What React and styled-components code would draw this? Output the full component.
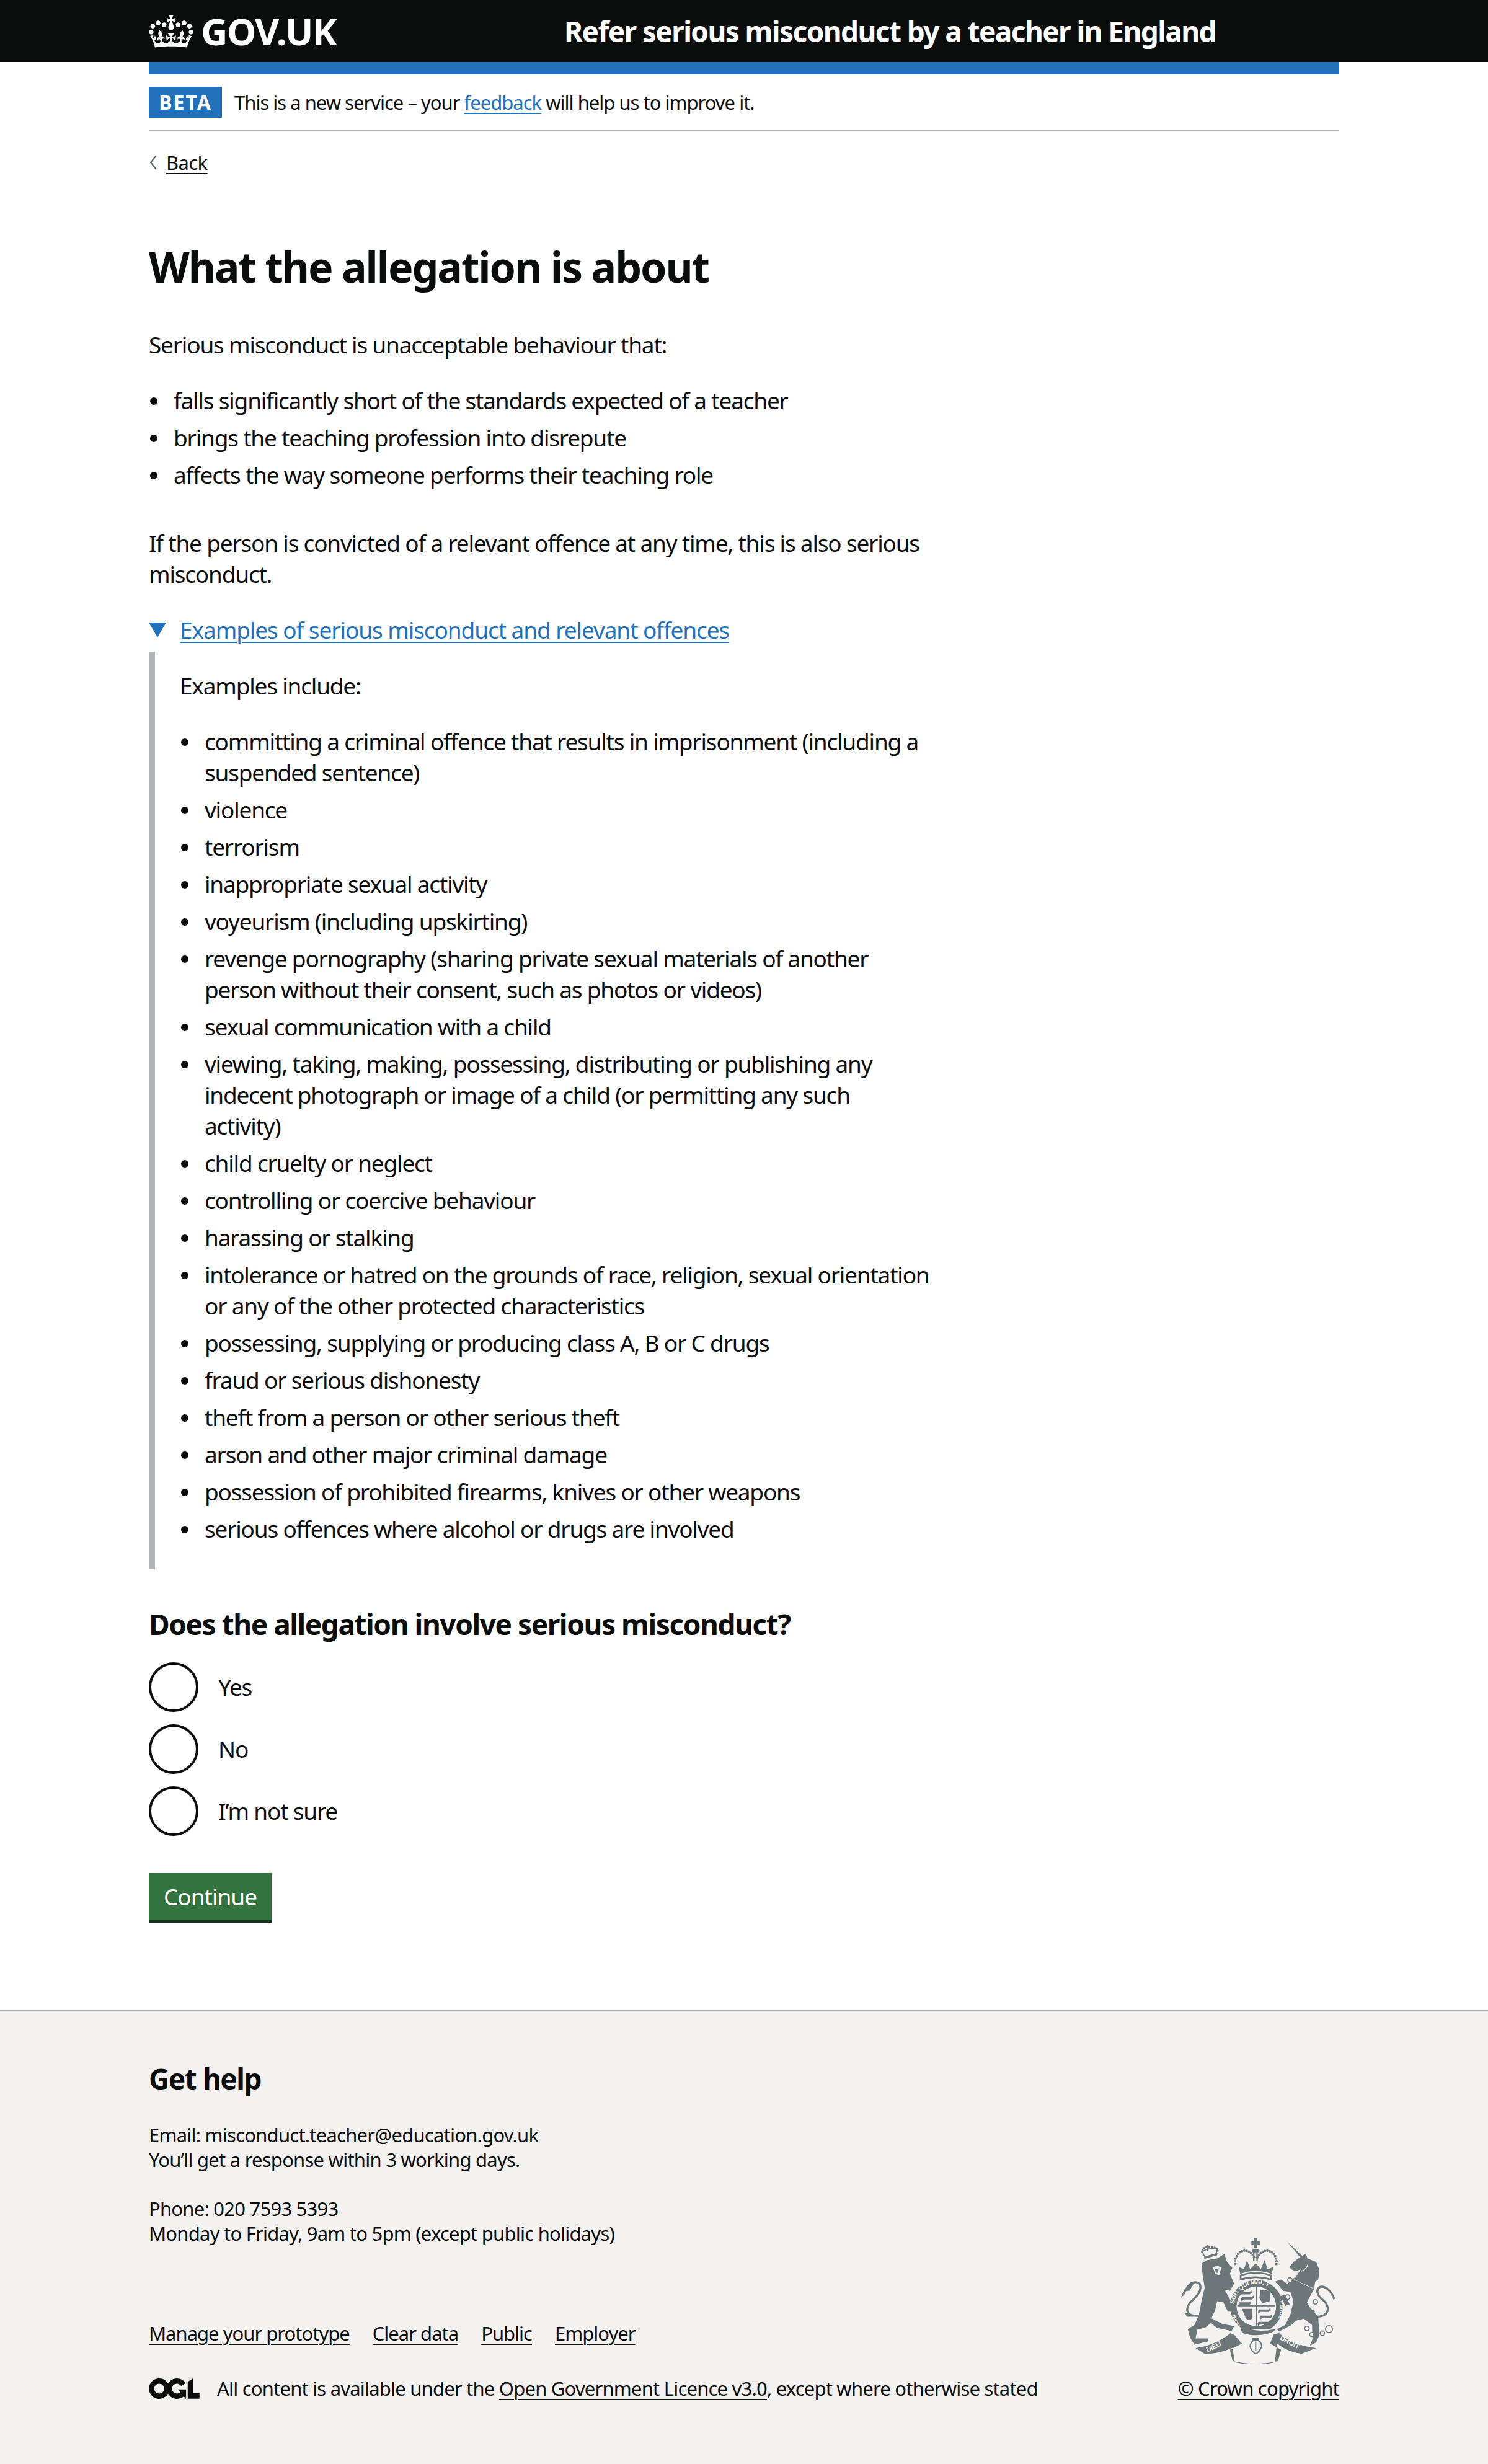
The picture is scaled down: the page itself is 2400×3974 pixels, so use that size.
import React from "react";
import styled, { createGlobalStyle } from "styled-components";

const Global = createGlobalStyle`
  html, body { margin: 0; padding: 0; background: #fff; }
  body { font-family: "Noto Sans", "Liberation Sans", sans-serif; color: #0b0c0c; font-size: 37px; line-height: 50px; letter-spacing: -1.2px; }
  * { box-sizing: border-box; }
`;

const Header = styled.header`
  height: 100px; background: #0b0c0c; color: #fff; padding: 0 240px;
  display: flex; align-items: center;
`;
const Logo = styled.div`display: flex; align-items: center; gap: 12px; width: 670px; flex: none;`;
const LogoText = styled.span`font-size: 60px; line-height: 60px; font-weight: 700; letter-spacing: -1.5px;`;
const ServiceName = styled.div`font-size: 46px; line-height: 50px; font-weight: 700; letter-spacing: -1.6px; white-space: nowrap;`;
const Container = styled.div`margin: 0 240px; width: 1920px;`;
const Band = styled.div`height: 20px; background: #2371b9;`;
const Phase = styled.div`
  display: flex; align-items: center; gap: 20px; height: 92px;
  border-bottom: 2px solid #b1b4b6; font-size: 31px; line-height: 40px; letter-spacing: -1px;
`;
const Tag = styled.strong`
  width: 118px; height: 50px; background: #2371b9; color: #fff; display: flex; align-items: center; justify-content: center;
  font-size: 32px; letter-spacing: 2px; font-weight: 700;
`;
const BlueLink = styled.a`color: #2371b9; text-decoration: underline; text-decoration-thickness: 2px; text-underline-offset: 5px;`;
const BackRow = styled.div`
  margin-top: 30px; display: flex; align-items: center; gap: 14px; font-size: 31px; line-height: 40px; letter-spacing: -0.6px;
`;
const DarkLink = styled.a`color: #0b0c0c; text-decoration: underline; text-decoration-thickness: 2px; text-underline-offset: 5px; white-space: ${p => p.$nowrap ? "nowrap" : "normal"};`;
const Main = styled.main`width: 1260px; padding-top: 108px;`;
const Title = styled.h1`margin: 0 0 61px; font-size: 68px; line-height: 80px; font-weight: 700; letter-spacing: -2.1px;`;
const P = styled.p`margin: 0 0 ${p => p.$mb ?? 40}px;`;
const List = styled.ul`margin: 0 0 ${p => p.$mb ?? 60}px; padding: 0 0 0 40px; list-style: none;`;
const Li = styled.li`
  margin-bottom: 10px; position: relative; white-space: pre-line;
  &::before { content: ""; position: absolute; left: -38px; top: 20px; width: 12px; height: 12px; border-radius: 50%; background: #0b0c0c; }
`;
const Summary = styled.div`display: flex; align-items: center; gap: 22px; margin-bottom: 10px; letter-spacing: -1.08px;`;
const Reveal = styled.div`border-left: 10px solid #b1b4b6; padding: 30px 0 30px 40px; margin-right: -30px;`;
const Question = styled.h2`margin: 58px 0 32px; font-size: 46px; line-height: 60px; font-weight: 700; letter-spacing: -1.45px;`;
const Radios = styled.div`display: flex; flex-direction: column; gap: 20px;`;
const Radio = styled.label`display: flex; align-items: center; gap: 32px; height: 80px;`;
const Circle = styled.span`width: 80px; height: 80px; border: 4px solid #0b0c0c; border-radius: 50%; background: #fff; flex: none;`;
const Button = styled.button`
  display: block; margin: 60px 0 ${p => p.$mb}px; width: 198px; height: 76px; padding: 0; border: 0; background: #327340; color: #fff;
  box-shadow: 0 4px 0 #122f1b; font: inherit; letter-spacing: -1px;
`;
const Footer = styled.footer`
  border-top: 2px solid #b1b4b6; background: #f3f2f1; padding: 78px 240px 102px; height: 733px;
  font-size: 31px; line-height: 40px; letter-spacing: -0.77px;
  display: flex; justify-content: space-between; align-items: flex-end;
`;
const Meta = styled.div`flex: 1;`;
const FooterTitle = styled.h2`margin: 0 0 41px; font-size: 46px; line-height: 60px; font-weight: 700; letter-spacing: -1.45px;`;
const FooterText = styled.p`margin: 0 0 39px;`;
const FooterLinks = styled.div`display: flex; gap: 37px; margin: 121px 0 49px; letter-spacing: -1px;`;
const Licence = styled.div`display: flex; align-items: center; gap: 28px; letter-spacing: -0.8px;`;
const Copyright = styled.div`display: flex; flex-direction: column; align-items: flex-end; gap: 19px; width: 262px; flex: none;`;
const ArmsWrap = styled.div`display: flex; margin-right: 7px;`;

const Crown = () => (
  <svg width="72" height="53" viewBox="0 0 132 97" aria-hidden="true">
    <path fill="currentColor" fillRule="evenodd" d="M25 30.2c3.5 1.5 7.7-.2 9.1-3.7 1.5-3.6-.2-7.8-3.9-9.2-3.6-1.4-7.6.3-9.1 3.9-1.4 3.5.3 7.5 3.9 9zM9 39.5c3.6 1.5 7.8-.2 9.2-3.7 1.5-3.6-.2-7.8-3.9-9.1-3.6-1.5-7.6.2-9.1 3.8-1.4 3.5.3 7.5 3.8 9zM4.4 57.2c3.5 1.5 7.7-.2 9.1-3.8 1.5-3.6-.2-7.7-3.9-9.1-3.5-1.5-7.6.3-9.1 3.8-1.4 3.5.3 7.6 3.9 9.1zm38.3-21.4c3.5 1.5 7.7-.2 9.1-3.8 1.5-3.6-.2-7.7-3.9-9.1-3.6-1.5-7.6.3-9.1 3.8-1.3 3.6.4 7.7 3.9 9.1zm64.4-5.6c-3.6 1.5-7.8-.2-9.1-3.7-1.5-3.6.2-7.8 3.8-9.2 3.6-1.4 7.7.3 9.2 3.9 1.3 3.5-.4 7.5-3.9 9zm15.9 9.3c-3.6 1.5-7.7-.2-9.1-3.7-1.5-3.6.2-7.8 3.7-9.1 3.6-1.5 7.7.2 9.2 3.8 1.5 3.5-.3 7.5-3.8 9zm4.7 17.7c-3.6 1.5-7.8-.2-9.2-3.8-1.5-3.6.2-7.7 3.9-9.1 3.6-1.5 7.7.3 9.2 3.8 1.3 3.5-.4 7.6-3.9 9.1zM89.3 35.8c-3.6 1.5-7.8-.2-9.2-3.8-1.4-3.6.2-7.7 3.9-9.1 3.6-1.5 7.7.3 9.2 3.8 1.4 3.6-.3 7.7-3.9 9.1zM69.7 17.7l8.9 4.7V9.3l-8.9 2.8c-.2-.3-.5-.6-.9-.9L72.4 0H59.6l3.5 11.2c-.3.3-.6.5-.9.9l-8.8-2.8v13.1l8.8-4.7c.3.3.6.7.9.9l-5 15.4v.1c-.2.8-.4 1.6-.4 2.4 0 4.1 3.1 7.5 7 8.1h.2c.3 0 .7.1 1 .1.4 0 .7 0 1-.1h.2c4-.6 7.1-4.1 7.1-8.1 0-.8-.1-1.7-.4-2.4V34l-5.1-15.4c.4-.2.7-.6 1-.9zM66 92.8c16.9 0 32.8 1.1 47.1 3.2 4-16.9 8.9-26.7 14-33.5l-9.6-3.4c1 4.9 1.1 7.2 0 10.2-1.5-1.4-3-4.3-4.2-8.7L108.6 76c2.8-2 5-3.2 7.5-3.3-4.4 9.4-10 11.9-13.6 11.2-4.3-.8-6.3-4.6-5.6-7.9 1-4.7 5.7-5.9 8-.5 4.3-8.7-3-11.4-7.6-8.8 7.1-7.2 7.9-13.5 2.1-21.1-8 6.1-8.1 12.3-4.5 20.8-4.7-5.4-12.1-2.5-9.5 6.2 3.4-5.2 7.9-2 7.2 3.1-.6 4.3-6.4 7.8-13.5 7.2-10.3-.9-10.9-8-11.2-13.8 2.5-.5 7.1 1.8 11 7.3L80.2 60c-4.1 4.4-8 5.3-12.3 5.4 1.4-4.4 8-11.6 8-11.6H55.5s6.4 7.2 7.9 11.6c-4.2-.1-8-1-12.3-5.4l1.4 16.4c3.9-5.5 8.5-7.7 10.9-7.3-.3 5.8-.9 12.8-11.1 13.8-7.2.6-12.9-2.9-13.5-7.2-.7-5 3.8-8.3 7.1-3.1 2.7-8.7-4.6-11.6-9.4-6.2 3.7-8.5 3.6-14.7-4.6-20.8-5.8 7.6-5 13.9 2.2 21.1-4.7-2.6-11.9.1-7.7 8.8 2.3-5.5 7.1-4.2 8.1.5.7 3.3-1.3 7.1-5.7 7.9-3.5.7-9-1.8-13.5-11.2 2.5.1 4.7 1.3 7.5 3.3l-4.7-15.4c-1.2 4.4-2.7 7.2-4.3 8.7-1.1-3-.9-5.3 0-10.2l-9.5 3.4c5 6.9 9.9 16.7 14 33.5 14.8-2.1 30.8-3.2 47.7-3.2z" />
  </svg>
);

const Chevron = () => (
  <svg width="14" height="26" viewBox="0 0 14 26" aria-hidden="true" style={{ flex: "none" }}>
    <path d="M12 2 L3 13 L12 24" fill="none" stroke="#505a5f" strokeWidth="2" />
  </svg>
);

const Triangle = () => (
  <svg width="28" height="24" viewBox="0 0 28 24" aria-hidden="true" style={{ flex: "none" }}>
    <path d="M0 0 H28 L14 24 Z" fill="#2371b9" />
  </svg>
);

const Ogl = () => (
  <svg width="82" height="33" viewBox="0 0 483.2 195.7" aria-hidden="true" style={{ flex: "none" }}>
    <path fill="#0b0c0c" d="M421.5 142.8V.1l-50.7 32.3v161.1h112.4v-50.7zm-122.3-9.6A47.12 47.12 0 0 1 221 97.8c0-26 21.1-47.1 47.1-47.1 16.7 0 31.4 8.7 39.7 21.8l42.7-27.2A97.63 97.63 0 0 0 268.1 0c-36.5 0-68.3 20.1-85.1 49.7A98 98 0 0 0 97.8 0C43.9 0 0 43.9 0 97.8s43.9 97.8 97.8 97.8c36.5 0 68.3-20.1 85.1-49.7a97.76 97.76 0 0 0 149.6 25.4l19.4 22.2h3v-87.8h-80l24.3 27.5zM97.8 145c-26 0-47.1-21.1-47.1-47.1s21.1-47.1 47.1-47.1 47.2 21 47.2 47S123.8 145 97.8 145" />
  </svg>
);

const ARMS = "#6d7678";
const BG = "#f3f2f1";
const dots = (pts, r) => pts.map(([x, y], i) => <circle key={i} cx={x} cy={y} r={r} fill={ARMS} />);
const arc = (cx, cy, rx, ry, a0, a1, n) =>
  Array.from({ length: n }, (_, i) => {
    const a = ((a0 + ((a1 - a0) * i) / (n - 1)) * Math.PI) / 180;
    return [cx + rx * Math.cos(a), cy + ry * Math.sin(a)];
  });

const Arms = () => (
  <svg width="250" height="203" viewBox="130 90 750 610" aria-hidden="true">
    <defs>
      <path id="garterTop" d="M392 420 A106 106 0 0 1 612 420" />
      <path id="garterLeft" d="M425 515 A106 106 0 0 1 398 420" />
      <path id="garterRight" d="M612 395 A112 112 0 0 1 570 520" />
      <path id="ribbonL" d="M262 642 Q320 620 372 580" />
      <path id="ribbonR" d="M612 580 Q670 610 735 645" />
    </defs>
    <path fill={ARMS} d="M234 212 L262 196 L310 188 L345 166 L358 205 L384 232 L372 262 L392 310 L372 345 L345 338 L392 420 L402 445 L362 445 L340 400 L310 395 L300 440 L282 478 L335 505 L392 515 L380 540 L340 530 L310 525 L280 500 L250 525 L215 530 L205 575 L265 575 L265 590 L200 605 L178 570 L168 530 L200 510 L222 460 L235 390 L250 330 L240 270 Z" />
    <path fill={BG} d="M290 232 L310 222 L330 232 L322 262 L330 262 L318 268 L300 262 Z" />
    <path fill={ARMS} d="M298 240 L318 236 L314 258 L304 256 Z" />
    <path fill="none" stroke={ARMS} strokeWidth="10" d="M222 465 C165 470 150 440 180 400 C215 370 240 340 225 310 C205 295 170 305 158 345" />
    <path fill={ARMS} d="M134 378 L150 340 L185 300 L200 305 L175 345 L160 345 L150 365 Z M150 450 L180 455 L195 470 L165 470 Z" />
    <path fill="none" stroke={ARMS} strokeWidth="5" d="M250 180 L238 155 Q265 135 310 142 L305 170 Z" />
    <path fill={ARMS} d="M248 190 L310 172 L312 160 L285 168 L248 178 Z" />
    {dots(arc(275, 155, 38, 25, 180, 350, 9), 5)}
    <path fill={ARMS} d="M260 122 H268 V130 H276 V137 H268 V150 H260 V137 H252 V130 H260 Z" />
    <path fill={ARMS} d="M648 104 L722 175 L740 165 L748 188 L790 205 L806 245 L800 290 L785 300 L780 335 L745 400 L760 425 L800 470 L805 560 L790 595 L760 610 L772 580 L770 510 L730 480 L690 490 L670 510 L610 542 L600 530 L640 510 L665 460 L680 395 L665 350 L630 345 L610 320 L590 300 L620 290 L650 310 L680 285 L700 265 L715 240 L690 250 L670 240 L660 230 L680 205 L712 182 Z" />
    <path fill="none" stroke={BG} strokeWidth="4" d="M750 215 Q745 240 718 250" />
    <path fill="none" stroke={ARMS} strokeWidth="10" d="M790 470 C850 470 860 430 830 395 C795 370 785 340 810 325 C840 320 865 350 878 385" />
    <path fill={BG} d="M688 275 L780 320 L775 335 L682 290 Z" />
    <path fill={ARMS} d="M690 280 L695 268 L702 278 L712 268 L720 286 L735 280 L745 296 L760 292 L768 310 L780 312 L776 332 L684 290 Z" />
    {dots([[755, 480], [775, 445]], 8)}
    {[[663, 292, 11], [652, 375, 11], [786, 398, 11], [745, 527, 11], [768, 556, 10], [820, 550, 11], [852, 530, 17]].map(([x, y, r], i) => (
      <circle key={i} cx={x} cy={y} r={r} fill={BG} stroke={ARMS} strokeWidth="5" />
    ))}
    <path fill={ARMS} d="M610 370 L640 365 L662 410 L640 418 L625 385 Z" />
    <path fill={ARMS} d="M488 90 H505 V105 H517 V120 H505 V135 H488 V120 H476 V105 H488 Z" />
    <rect x="478" y="144" width="38" height="14" fill={ARMS} rx="7" />
    <rect x="484" y="160" width="7" height="40" fill={ARMS} />
    <rect x="500" y="160" width="7" height="40" fill={ARMS} />
    {dots(arc(445, 205, 48, 55, 170, 335, 13), 6)}
    {dots(arc(550, 205, 48, 55, 205, 370, 13), 6)}
    <path fill={ARMS} d="M416 230 L440 240 L455 195 L470 240 L497 210 L522 240 L540 195 L555 240 L582 230 L575 262 Q497 235 422 262 Z" />
    <path fill="none" stroke={ARMS} strokeWidth="8" d="M424 270 Q497 245 572 270 L572 290 Q497 268 424 290 Z" />
    <circle cx="500" cy="420" r="128" fill={ARMS} />
    <circle cx="500" cy="420" r="96" fill={BG} />
    <text fontFamily="Liberation Sans, sans-serif" fontWeight="700" fontSize="30" fill={BG}>
      <textPath href="#garterTop" startOffset="3%">SOIT QUI MAL Y</textPath>
    </text>
    <text fontFamily="Liberation Sans, sans-serif" fontWeight="700" fontSize="26" fill={BG}>
      <textPath href="#garterLeft">HONI</textPath>
    </text>
    <text fontFamily="Liberation Sans, sans-serif" fontWeight="700" fontSize="26" fill={BG}>
      <textPath href="#garterRight">PENSE</textPath>
    </text>
    <rect x="408" y="412" width="182" height="8" fill={ARMS} />
    <rect x="496" y="322" width="8" height="200" fill={ARMS} />
    {[[420, 350], [430, 375], [418, 400], [512, 435], [520, 465], [510, 495]].map(([x, y], i) => (
      <path key={i} fill={ARMS} d={`M${x} ${y} h48 l8 -8 l2 12 l-10 8 h-40 l-10 8 l-2 -12 Z`} />
    ))}
    <path fill={ARMS} d="M520 340 L570 345 L565 395 L530 405 L515 380 Z" />
    <path fill={ARMS} d="M430 432 L480 432 L478 480 Q465 490 450 480 Z" />
    <path fill={BG} d="M420 530 L580 530 L585 545 L500 570 L428 545 Z" />
    <path fill={ARMS} d="M422 510 L440 518 Q500 550 590 530 L588 540 Q510 575 430 548 Z" />
    {dots([[472, 540], [508, 552]], 6)}
    <rect x="478" y="572" width="36" height="16" fill={ARMS} />
    <path fill="none" stroke={ARMS} strokeWidth="6" d="M497 580 Q470 590 470 615 Q478 640 497 650 Q516 640 526 615 Q526 590 497 580 M497 590 V635" />
    <path fill={ARMS} d="M205 622 Q300 610 375 550 L395 560 L430 600 L372 630 L385 685 Q497 710 605 685 L620 630 L566 600 L585 555 L610 550 Q680 610 790 622 Q730 645 720 650 Q650 640 600 600 L590 690 Q497 715 395 690 L385 620 Q320 650 250 650 Z" />
    <text fontFamily="Liberation Sans, sans-serif" fontWeight="700" fontSize="34" fill={BG}>
      <textPath href="#ribbonL">DIEU</textPath>
    </text>
    <text fontFamily="Liberation Sans, sans-serif" fontWeight="700" fontSize="34" fill={BG}>
      <textPath href="#ribbonR">DROIT</textPath>
    </text>
    <text x="497" y="692" textAnchor="middle" fontFamily="Liberation Sans, sans-serif" fontWeight="700" fontSize="36" fill={BG}>ET MON</text>
  </svg>
);

const ITEMS = [
  "committing a criminal offence that results in imprisonment (including a suspended sentence)",
  "violence",
  "terrorism",
  "inappropriate sexual activity",
  "voyeurism (including upskirting)",
  "revenge pornography (sharing private sexual materials of another\nperson without their consent, such as photos or videos)",
  "sexual communication with a child",
  "viewing, taking, making, possessing, distributing or publishing any indecent photograph or image of a child (or permitting any such\nactivity)",
  "child cruelty or neglect",
  "controlling or coercive behaviour",
  "harassing or stalking",
  "intolerance or hatred on the grounds of race, religion, sexual orientation or any of the other protected characteristics",
  "possessing, supplying or producing class A, B or C drugs",
  "fraud or serious dishonesty",
  "theft from a person or other serious theft",
  "arson and other major criminal damage",
  "possession of prohibited firearms, knives or other weapons",
  "serious offences where alcohol or drugs are involved",
];

export default function App() {
  return (
    <>
      <Global />
      <Header>
        <Logo><Crown /><LogoText>GOV.UK</LogoText></Logo>
        <ServiceName>Refer serious misconduct by a teacher in England</ServiceName>
      </Header>
      <Container>
        <Band />
        <Phase>
          <Tag>BETA</Tag>
          <span>This is a new service – your <BlueLink href="#">feedback</BlueLink> will help us to improve it.</span>
        </Phase>
        <BackRow><Chevron /><DarkLink href="#">Back</DarkLink></BackRow>
        <Main>
          <Title>What the allegation is about</Title>
          <P>Serious misconduct is unacceptable behaviour that:</P>
          <List>
            <Li>falls significantly short of the standards expected of a teacher</Li>
            <Li>brings the teaching profession into disrepute</Li>
            <Li>affects the way someone performs their teaching role</Li>
          </List>
          <P>If the person is convicted of a relevant offence at any time, this is also serious misconduct.</P>
          <Summary><Triangle /><BlueLink href="#">Examples of serious misconduct and relevant offences</BlueLink></Summary>
          <Reveal>
            <P>Examples include:</P>
            <List $mb={0}>{ITEMS.map(t => <Li key={t}>{t}</Li>)}</List>
          </Reveal>
          <Question>Does the allegation involve serious misconduct?</Question>
          <Radios>
            <Radio><Circle />Yes</Radio>
            <Radio><Circle />No</Radio>
            <Radio><Circle />I’m not sure</Radio>
          </Radios>
          <Button $mb={144}>Continue</Button>
        </Main>
      </Container>
      <Footer>
        <Meta>
          <FooterTitle>Get help</FooterTitle>
          <FooterText>Email: misconduct.teacher@education.gov.uk<br />You’ll get a response within 3 working days.</FooterText>
          <FooterText>Phone: 020 7593 5393<br />Monday to Friday, 9am to 5pm (except public holidays)</FooterText>
          <FooterLinks>
            <DarkLink href="#">Manage your prototype</DarkLink>
            <DarkLink href="#">Clear data</DarkLink>
            <DarkLink href="#">Public</DarkLink>
            <DarkLink href="#">Employer</DarkLink>
          </FooterLinks>
          <Licence>
            <Ogl />
            <span>All content is available under the <DarkLink href="#">Open Government Licence v3.0</DarkLink>, except where otherwise stated</span>
          </Licence>
        </Meta>
        <Copyright>
          <ArmsWrap><Arms /></ArmsWrap>
          <DarkLink href="#" $nowrap>© Crown copyright</DarkLink>
        </Copyright>
      </Footer>
    </>
  );
}
